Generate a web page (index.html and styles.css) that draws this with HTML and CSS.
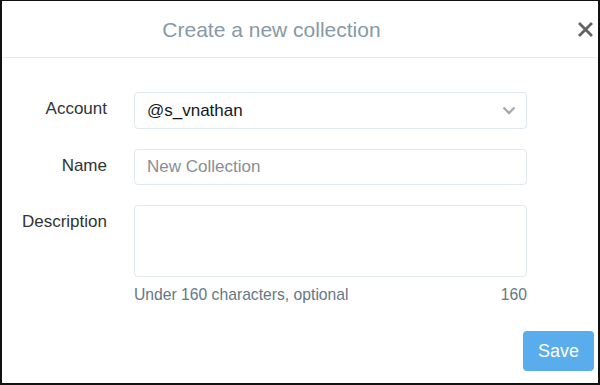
FILE: index.html
```html
<!DOCTYPE html>
<html lang="en">
<head>
<meta charset="UTF-8">
<title>Create a new collection</title>
<link rel="stylesheet" href="styles.css">
</head>
<body>
<div class="modal">
  <div class="modal-header">
    <h2 class="modal-title">Create a new collection</h2>
    <button class="close-btn" aria-label="Close">
      <svg width="17" height="17" viewBox="0 0 17 17">
        <path d="M2 2 L15 15 M15 2 L2 15" stroke="#626262" stroke-width="2.8" fill="none"/>
      </svg>
    </button>
  </div>

  <div class="modal-body">
    <div class="form-grid">
      <label class="form-label" for="account">Account</label>
      <div class="select-box" id="account">
        <span class="select-value">@s_vnathan</span>
        <svg class="chevron" width="14" height="9" viewBox="0 0 14 9">
          <path d="M1.5 1.5 L7 7 L12.5 1.5" stroke="#a7a9ab" stroke-width="2.4" fill="none"/>
        </svg>
      </div>

      <label class="form-label" for="name">Name</label>
      <input class="text-input" id="name" type="text" placeholder="New Collection">

      <label class="form-label" for="description">Description</label>
      <div class="field">
        <textarea class="text-area" id="description"></textarea>
        <div class="help-row">
          <span>Under 160 characters, optional</span>
          <span>160</span>
        </div>
      </div>
    </div>
  </div>

  <div class="modal-footer">
    <button class="save-btn">Save</button>
  </div>
</div>
</body>
</html>
```

FILE: styles.css
```css
html, body {
  margin: 0;
  padding: 0;
  background: #fff;
}
body {
  font-family: "Liberation Sans", Arial, sans-serif;
}
.modal {
  box-sizing: border-box;
  width: 600px;
  height: 385px;
  border: 2px solid #111;
  border-top-width: 1px;
  display: flex;
  flex-direction: column;
  background: #fff;
}
.modal-header {
  display: flex;
  align-items: center;
  height: 56px;
  border-bottom: 1px solid #e6ecf0;
}
.modal-title {
  flex: 1;
  margin: 0;
  padding-top: 1px;
  text-align: center;
  font-size: 21px;
  font-weight: normal;
  color: #8899a6;
}
.close-btn {
  display: flex;
  align-items: center;
  justify-content: flex-end;
  width: 57px;
  height: 56px;
  padding: 0 4px 0 0;
  border: 0;
  background: none;
}
.modal-body {
  padding-top: 34px;
}
.form-grid {
  display: grid;
  grid-template-columns: 105px 393px;
  column-gap: 27px;
  row-gap: 20px;
}
.form-label {
  text-align: right;
  font-size: 17px;
  color: #2f3336;
  padding-top: 7px;
}
.select-box,
.text-input,
.text-area {
  box-sizing: border-box;
  width: 393px;
  border: 1px solid #e1e8ed;
  border-radius: 4px;
  background: #fff;
  font-family: inherit;
  font-size: 17px;
}
.select-box {
  display: flex;
  align-items: center;
  justify-content: space-between;
  height: 37px;
  padding: 0 10px 0 12px;
  color: #14171a;
}
.text-input {
  height: 36px;
  padding: 0 12px;
  color: #14171a;
}
.text-input::placeholder {
  color: #8a8d91;
}
.text-area {
  display: block;
  height: 72px;
  padding: 8px 12px;
  resize: none;
}
.help-row {
  display: flex;
  justify-content: space-between;
  margin-top: 9px;
  font-size: 15.7px;
  color: #657786;
}
.modal-footer {
  display: flex;
  justify-content: flex-end;
  padding: 27px 4px 0 0;
}
.save-btn {
  width: 71px;
  height: 40px;
  border: 0;
  border-radius: 4px;
  background: #59adec;
  color: #fff;
  font-family: inherit;
  font-size: 18px;
}
```
